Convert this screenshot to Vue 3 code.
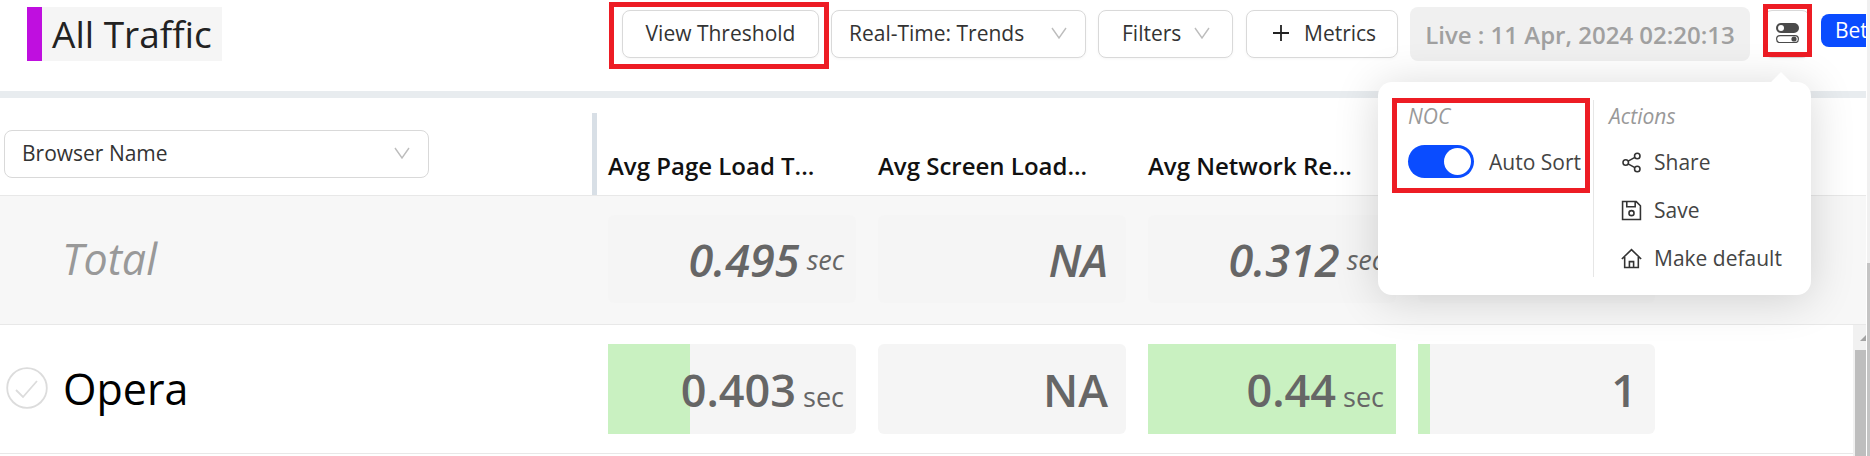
<template>
  <div class="page">
    <div class="main">
      <header class="topbar">
        <div class="title">
          <span class="title-mark"></span>
          <h1>All Traffic</h1>
        </div>
        <div class="tools">
          <button class="btn btn-threshold">
            View Threshold
            <span class="mark mark-threshold"></span>
          </button>
          <button class="btn btn-mode">
            Real-Time: Trends
            <svg class="chev" viewBox="0 0 16 12"><path d="M1 1l7 10 7-10" /></svg>
          </button>
          <button class="btn btn-filters">
            Filters
            <svg class="chev" viewBox="0 0 16 12"><path d="M1 1l7 10 7-10" /></svg>
          </button>
          <button class="btn btn-metrics">
            <svg class="plus" viewBox="0 0 18 18"><path d="M9 1v16M1 9h16" /></svg>
            Metrics
          </button>
          <div class="live">Live : 11 Apr, 2024 02:20:13</div>
          <button class="btn btn-settings">
            <svg class="switches" viewBox="0 0 23 20">
              <rect x="0" y="0" width="23" height="10" rx="5" fill="#4a4a4a" />
              <circle cx="5" cy="5" r="3" fill="#fff" />
              <rect x="0.6" y="12.6" width="21.8" height="7" rx="3.5" fill="#fff" stroke="#4a4a4a" stroke-width="1.2" />
              <circle cx="18" cy="16" r="2.6" fill="#4a4a4a" />
            </svg>
            <span class="mark mark-settings"></span>
          </button>
          <div class="beta"><span>Beta</span></div>
        </div>
      </header>
      <div class="band"></div>

      <div class="table">
        <div class="row row-head">
          <div class="name-col">
            <div class="select">
              Browser Name
              <svg class="chev" viewBox="0 0 16 12"><path d="M1 1l7 10 7-10" /></svg>
            </div>
          </div>
          <div class="cells head-cells">
            <div v-for="h in headers" :key="h" class="head-cell">{{ h }}</div>
          </div>
        </div>

        <div class="row row-total">
          <div class="name-col total-name">Total</div>
          <div class="cells">
            <div v-for="(c, i) in totals" :key="i" class="cell" :class="c.cls">
              {{ c.value }}<span v-if="c.unit" class="unit">{{ c.unit }}</span>
            </div>
          </div>
        </div>

        <div class="row row-item">
          <div class="name-col item-name">
            <svg class="check" viewBox="0 0 42 42">
              <circle cx="21" cy="21" r="19.8" />
              <path d="M10 23l7 7 14-16" />
            </svg>
            Opera
          </div>
          <div class="cells">
            <div v-for="(c, i) in items" :key="i" class="cell" :class="c.cls">
              <span class="fill" :style="{ width: c.fill + 'px' }"></span>
              <span class="val">{{ c.value }}<span v-if="c.unit" class="unit">{{ c.unit }}</span></span>
            </div>
          </div>
        </div>
      </div>

      <div class="scrollbar">
        <span class="arrow"></span>
        <span class="thumb"></span>
      </div>

      <div class="popup">
        <span class="popup-arrow"></span>
        <div class="pop-left">
          <span class="mark mark-noc"></span>
          <div class="pop-label">NOC</div>
          <div class="auto-sort">
            <span class="toggle"><span class="knob"></span></span>
            Auto Sort
          </div>
        </div>
        <div class="pop-right">
          <div class="pop-label">Actions</div>
          <div class="action">
            <svg viewBox="0 0 20 20"><circle cx="4.5" cy="10" r="2.6" /><circle cx="15.5" cy="3.8" r="2.6" /><circle cx="15.5" cy="16.2" r="2.6" /><path d="M6.8 8.7l6.4-3.6M6.8 11.3l6.4 3.6" /></svg>
            Share
          </div>
          <div class="action">
            <svg viewBox="0 0 20 20"><path d="M1.5 1.5h13l4 4v13h-17zM5.5 1.5v5h8v-5" /><circle cx="10" cy="12.5" r="2.4" /></svg>
            Save
          </div>
          <div class="action">
            <svg viewBox="0 0 20 20"><path d="M0.8 10.5L10 1.5l9.2 9M3.5 8.5v10h13v-10M8 18.5v-5.5h4v5.5" /></svg>
            Make default
          </div>
        </div>
      </div>
    </div>
    <div class="edge"><span class="edge-thumb"></span></div>
  </div>
</template>

<script setup>
const headers = ['Avg Page Load T...', 'Avg Screen Load...', 'Avg Network Re...']

const totals = [
  { value: '0.495', unit: 'sec' },
  { value: 'NA', cls: 'wide' },
  { value: '0.312', unit: 'sec' },
  { value: '', cls: 'wide' },
]

const items = [
  { value: '0.403', unit: 'sec', fill: 82 },
  { value: 'NA', cls: 'wide', fill: 0 },
  { value: '0.44', unit: 'sec', fill: 248 },
  { value: '1', cls: 'wide', fill: 12 },
]
</script>

<style>
html,
body {
  margin: 0;
  background: #fff;
}
</style>

<style scoped>
.page {
  display: flex;
  width: 1870px;
  height: 456px;
  overflow: hidden;
  font-family: "Open Sans", "Noto Sans", sans-serif;
  color: #333;
}
.main {
  position: relative;
  width: 1867px;
  height: 456px;
  overflow: hidden;
  background: #fff;
}
.edge {
  display: flex;
  flex-direction: column;
  width: 3px;
  background: #f0f0f0;
}
.edge-thumb {
  flex: 1;
  margin-top: 263px;
  background: #c4c4c4;
}

/* top bar */
.topbar {
  display: flex;
  height: 91px;
}
.title {
  display: flex;
  align-items: center;
  width: 195px;
  height: 54px;
  margin: 7px 0 0 27px;
  background: #f5f5f5;
}
.title-mark {
  width: 15px;
  height: 54px;
  background: #bf0fdf;
}
.title h1 {
  margin: -2px 0 0 10px;
  font-size: 37px;
  font-weight: 400;
  color: #222;
}
.tools {
  display: flex;
  margin-left: 400px;
  padding-top: 10px;
}
.btn {
  position: relative;
  display: flex;
  align-items: center;
  height: 48px;
  padding: 0 0 2px;
  border: 1px solid #d9d9d9;
  border-radius: 8px;
  background: #fff;
  box-shadow: 0 1px 3px rgba(0, 0, 0, 0.04);
  font-family: inherit;
  font-size: 21px;
  color: #333;
  box-sizing: border-box;
}
.btn-threshold {
  justify-content: center;
  width: 197px;
}
.btn-mode {
  width: 255px;
  margin-left: 12px;
  padding-left: 17px;
}
.btn-mode .chev {
  margin-left: auto;
  margin-right: 18px;
}
.btn-filters {
  width: 135px;
  margin-left: 12px;
  padding-left: 23px;
}
.btn-filters .chev {
  margin-left: auto;
  margin-right: 22px;
}
.btn-metrics {
  width: 152px;
  margin-left: 13px;
  padding-left: 25px;
}
.plus {
  width: 18px;
  height: 18px;
  margin-right: 14px;
  fill: none;
  stroke: #222;
  stroke-width: 1.8;
}
.chev {
  width: 16px;
  height: 12px;
  fill: none;
  stroke: #bdbdbd;
  stroke-width: 1.4;
}
.live {
  display: flex;
  align-items: center;
  justify-content: center;
  width: 340px;
  height: 54px;
  margin: -3px 0 0 12px;
  border-radius: 8px;
  background: #f0f0f0;
  font-size: 24px;
  font-weight: 600;
  color: #a0a0a0;
}
.btn-settings {
  justify-content: center;
  width: 46px;
  margin-left: 14px;
}
.switches {
  width: 23px;
  height: 20px;
}
.beta {
  width: 45px;
  height: 33px;
  margin: 4px 0 0 11px;
  padding-left: 14px;
  border-radius: 8px 0 0 8px;
  background: #0a4cff;
  box-sizing: border-box;
  overflow: hidden;
  font-size: 21px;
  line-height: 33px;
  white-space: nowrap;
  color: #fff;
}

/* red annotation frames */
.mark {
  position: absolute;
  border: 5px solid #ed1c24;
  box-sizing: border-box;
  pointer-events: none;
}
.mark-threshold {
  top: -9px;
  left: -14px;
  width: 220px;
  height: 67px;
}
.mark-settings {
  top: -7px;
  left: -2px;
  width: 49px;
  height: 53px;
}
.mark-noc {
  top: 16px;
  left: 14px;
  width: 198px;
  height: 95px;
}

.band {
  width: 1866px;
  height: 7px;
  background: #e8ecef;
}

/* table */
.table {
  width: 1866px;
}
.row {
  display: flex;
  box-sizing: border-box;
  border-bottom: 1px solid #e8e8e8;
}
.name-col {
  display: flex;
  align-items: center;
  flex: none;
  width: 597px;
  box-sizing: border-box;
}
.cells {
  display: grid;
  grid-template-columns: 248px 248px 248px 237px;
  column-gap: 22px;
  padding-left: 11px;
}
.row-head {
  height: 98px;
}
.row-head .name-col {
  align-items: flex-start;
  padding: 32px 0 0 4px;
  position: relative;
}
.row-head .name-col::after {
  content: "";
  position: absolute;
  top: 15px;
  right: 0;
  bottom: 0;
  width: 5px;
  background: #d8dfe6;
}
.select {
  display: flex;
  align-items: center;
  justify-content: space-between;
  width: 425px;
  height: 48px;
  padding: 0 18px 2px 17px;
  border: 1px solid #d9d9d9;
  border-radius: 8px;
  box-sizing: border-box;
  font-size: 21px;
  color: #333;
}
.head-cells {
  padding-top: 53px;
}
.head-cell {
  font-size: 24px;
  font-weight: 600;
  line-height: 30px;
  color: #111;
  white-space: nowrap;
}
.row-total {
  height: 129px;
  padding-top: 19px;
  background: #f7f7f7;
}
.total-name {
  height: 86px;
  padding-left: 62px;
  font-size: 43px;
  font-style: italic;
  color: #999;
}
.row-item {
  height: 129px;
  padding-top: 19px;
}
.item-name {
  height: 88px;
  padding-left: 6px;
  font-size: 43px;
  color: #000;
}
.check {
  width: 42px;
  height: 42px;
  margin-right: 15px;
  fill: none;
  stroke: #dcdcdc;
  stroke-width: 1.8;
}
.cell {
  position: relative;
  display: flex;
  align-items: center;
  justify-content: flex-end;
  height: 88px;
  padding-right: 12px;
  border-radius: 6px;
  background: #f5f5f5;
  box-sizing: border-box;
  font-size: 45px;
  font-weight: 600;
  color: #666;
}
.row-total .cell {
  font-style: italic;
}
.row-item .cell {
  height: 90px;
}
.cell.wide {
  padding-right: 18px;
}
.fill {
  position: absolute;
  top: 0;
  bottom: 0;
  left: 0;
  background: #c9f1c1;
}
.val {
  position: relative;
}
.unit {
  margin-left: 7px;
  font-size: 27px;
  font-weight: 400;
}

/* scrollbar */
.scrollbar {
  position: absolute;
  top: 325px;
  bottom: 0;
  left: 1853px;
  width: 13px;
  background: #f1f1f1;
}
.arrow {
  position: absolute;
  top: 10px;
  right: 0;
  border-style: solid;
  border-width: 0 0 6px 6px;
  border-color: transparent transparent #a3a3a3 transparent;
}
.thumb {
  position: absolute;
  top: 25px;
  bottom: 0;
  left: 2px;
  right: 0;
  background: #bebebe;
}

/* settings popup */
.popup {
  position: absolute;
  top: 82px;
  left: 1378px;
  display: flex;
  width: 433px;
  height: 213px;
  border-radius: 14px;
  background: #fff;
  box-shadow: 0 4px 45px rgba(0, 0, 0, 0.16);
}
.popup-arrow {
  position: absolute;
  top: -7px;
  left: 396px;
  width: 14px;
  height: 14px;
  background: #fff;
  transform: rotate(45deg);
}
.pop-left {
  position: relative;
  width: 215px;
  padding: 20px 0 0 30px;
  box-sizing: border-box;
}
.pop-right {
  flex: 1;
  margin: 18px 0;
  padding: 2px 0 0 15px;
  border-left: 1px solid #e6e6e6;
}
.pop-label {
  font-size: 21px;
  font-style: italic;
  line-height: 28px;
  color: #999;
}
.pop-label + .action {
  margin-top: 8px;
}
.auto-sort {
  display: flex;
  align-items: center;
  margin-top: 15px;
  font-size: 21px;
  white-space: nowrap;
  color: #444;
}
.toggle {
  position: relative;
  flex: none;
  width: 66px;
  height: 33px;
  margin-right: 15px;
  border-radius: 17px;
  background: #0a4cff;
}
.knob {
  position: absolute;
  top: 3px;
  right: 3px;
  width: 27px;
  height: 27px;
  border-radius: 50%;
  background: #fff;
}
.action {
  display: flex;
  align-items: center;
  height: 48px;
  padding-left: 12px;
  font-size: 21px;
  white-space: nowrap;
  color: #444;
}
.action svg {
  width: 21px;
  height: 21px;
  margin-right: 12px;
  fill: none;
  stroke: #333;
  stroke-width: 1.5;
}
</style>
